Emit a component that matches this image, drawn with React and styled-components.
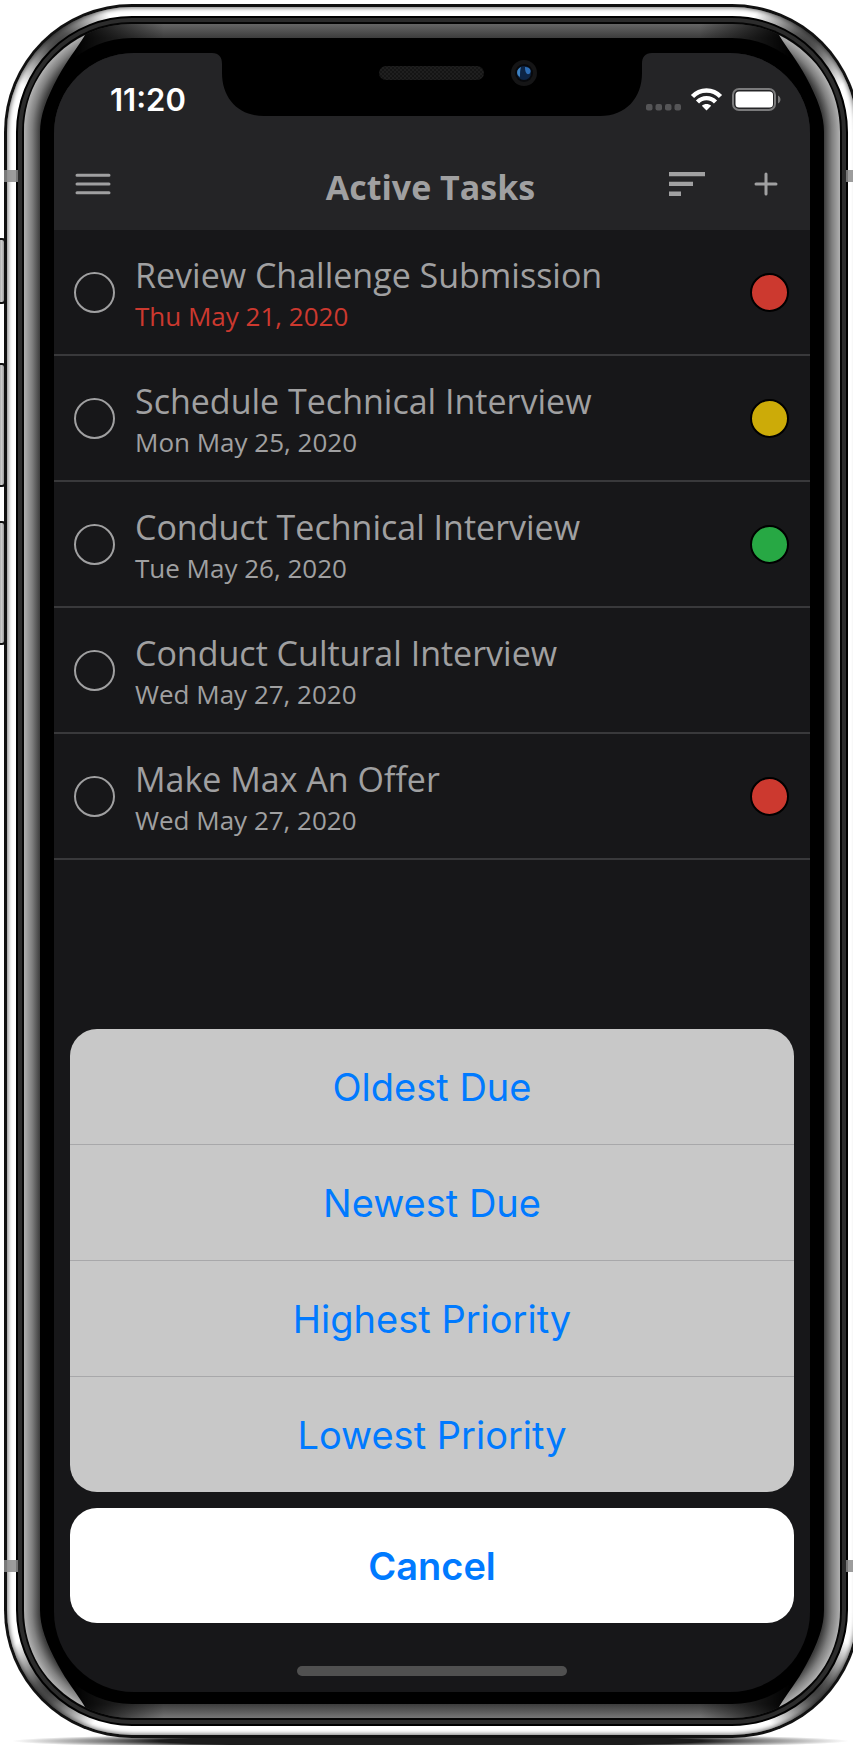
import React from "react";
import styled, { createGlobalStyle } from "styled-components";

const GlobalStyle = createGlobalStyle`
  *, *::before, *::after { box-sizing: border-box; }
  html, body { margin: 0; background: #fff; }
  button { border: 0; padding: 0; margin: 0; background: none; font: inherit; color: inherit; cursor: pointer; }
`;

const Stage = styled.main`
  position: relative;
  overflow: hidden;
  padding: 4px 0 7px 4px;
  min-height: 100vh;
  display: flex;
  flex-direction: column;
`;

const FloorShadow = styled.div`
  position: absolute;
  left: 12px;
  right: 4px;
  bottom: -4px;
  height: 16px;
  background: radial-gradient(closest-side, #1c1c1c 0%, #1c1c1c 65%, rgba(60, 60, 60, 0.6) 80%, transparent 100%);
`;

const Body = styled.div`
  position: relative;
  flex: 1;
  display: flex;
  flex-direction: column;
  margin-right: -7px;
  padding: 3px;
  border-radius: 128px;
  background: #111;
`;

const Steel = styled.div`
  flex: 1;
  display: flex;
  flex-direction: column;
  padding: 9px;
  border-radius: 125px;
  background:
    radial-gradient(circle at 56px 40px, #333 0, #555 14px, transparent 56px),
    radial-gradient(circle at calc(100% - 56px) 40px, #333 0, #555 14px, transparent 56px),
    radial-gradient(circle at 44px calc(100% - 48px), #333 0, #555 14px, transparent 56px),
    radial-gradient(circle at calc(100% - 44px) calc(100% - 48px), #333 0, #555 14px, transparent 56px),
    #fff;
  box-shadow: inset 0 0 4px 1px rgba(0, 0, 0, 0.55);
`;

const Gasket = styled.div`
  flex: 1;
  display: flex;
  flex-direction: column;
  padding: 6px;
  border: 2px solid #000;
  border-radius: 116px;
  background: #2c2c2c;
`;

const Glass = styled.div`
  position: relative;
  flex: 1;
  display: flex;
  flex-direction: column;
  padding: 14px 16px;
  border-radius: 108px;
  box-shadow: 0 0 0 2px #050505;
  background:
    linear-gradient(90deg, #000 50px, transparent 140px, transparent calc(100% - 140px), #000 calc(100% - 50px)),
    linear-gradient(180deg, #666 0, #3c3c3c 14px, #3c3c3c calc(100% - 14px), #777 100%);

  &::before {
    content: "";
    position: absolute;
    inset: 108px 0;
    background:
      linear-gradient(90deg, #b0b0b0, #808080 8px, #3c3c3c) left / 16px 100% no-repeat,
      linear-gradient(270deg, #b0b0b0, #808080 8px, #3c3c3c) right / 16px 100% no-repeat;
  }
`;

const Bezel = styled.div`
  flex: 1;
  display: flex;
  flex-direction: column;
  padding: 15px 14px 12px;
  border-radius: 92px;
  background: #000;
`;

const GlintSvg = styled.svg`
  position: absolute;
  width: 108px;
  height: 108px;
  ${(p) => (p.$v === "top" ? "top: 0;" : "bottom: 0;")}
  ${(p) => (p.$h === "left" ? "left: 0;" : "right: 0;")}
  transform: scale(${(p) => (p.$h === "left" ? 1 : -1)}, ${(p) => (p.$v === "top" ? 1 : -1)});
`;

function Glint({ v, h }) {
  const id = `glint-${v}-${h}`;
  return (
    <GlintSvg $v={v} $h={h} viewBox="0 0 108 108" aria-hidden="true">
      <defs>
        <radialGradient id={id} gradientUnits="userSpaceOnUse" cx="108" cy="108" r="108">
          <stop offset="0.852" stopColor="#3c3c3c" />
          <stop offset="0.926" stopColor="#808080" />
          <stop offset="1" stopColor="#b0b0b0" />
        </radialGradient>
      </defs>
      <path d="M0 108C0 68 20 32 61 11C52 26 43 36 34 53C22 75 16 92 16 108Z" fill={`url(#${id})`} />
    </GlintSvg>
  );
}

const AntennaBand = styled.span`
  position: absolute;
  ${(p) => (p.$h === "left" ? "left: 0;" : "right: 0;")}
  ${(p) => (p.$v === "top" ? "top: 166px;" : "bottom: 166px;")}
  width: 14px;
  height: 12px;
  background: rgba(140, 140, 140, 0.85);
`;

const SideKey = styled.span`
  position: absolute;
  left: -8px;
  top: ${(p) => p.$top}px;
  width: 10px;
  height: ${(p) => p.$h}px;
  border: 2px solid #111;
  border-radius: 4px;
  background: linear-gradient(90deg, #888, #ccc 60%, #999);
`;

const Screen = styled.div`
  position: relative;
  flex: 1;
  display: flex;
  flex-direction: column;
  overflow: hidden;
  border-radius: 80px;
  background: #171719;
  color: #a0a0a1;
  font-family: "Open Sans", sans-serif;
`;

const Notch = styled.svg`
  position: absolute;
  top: 0;
  left: 50%;
  width: 440px;
  height: 64px;
  margin-left: -220px;
`;

const Header = styled.header`
  background: #242426;
`;

const StatusBar = styled.div`
  display: flex;
  align-items: center;
  justify-content: space-between;
  height: 94px;
  padding: 0 28px 0 56px;
  color: #fff;
  font: 600 31px/40px Inter, sans-serif;
`;

const StatusIcons = styled.svg`
  width: 136px;
  height: 24px;
`;

const NavBar = styled.div`
  display: grid;
  grid-template-columns: 1fr auto 1fr;
  align-items: center;
  height: 83px;
  padding: 0 20px 9px 17px;
`;

const Title = styled.h1`
  margin: 0;
  padding-top: 6px;
  font-size: 34px;
  line-height: 44px;
  font-weight: 700;
`;

const NavActions = styled.div`
  display: flex;
  justify-content: flex-end;
  gap: 31px;
`;

const IconButton = styled.button`
  display: flex;
  align-items: center;
  justify-content: center;
  width: 48px;
  height: 48px;
`;

const MenuButton = styled(IconButton)`
  justify-self: start;
  width: 44px;
`;

const TaskList = styled.ul`
  flex: 1;
  margin: 0;
  padding: 0;
  list-style: none;
`;

const TaskRow = styled.li`
  display: flex;
  align-items: center;
  gap: 20px;
  height: 126px;
  padding: 0 21px 0 20px;
  border-bottom: 2px solid #39393b;
`;

const TaskCheck = styled.input`
  appearance: none;
  flex: none;
  width: 41px;
  height: 41px;
  margin: 0;
  border: 2px solid #a0a0a1;
  border-radius: 50%;
`;

const TaskText = styled.label`
  flex: 1;
  display: flex;
  flex-direction: column;
  padding-top: 2px;
`;

const TaskName = styled.span`
  font-size: 34px;
  line-height: 46px;
`;

const TaskDate = styled.time`
  font-size: 26px;
  line-height: 36px;
  color: ${(p) => (p.$late ? "#cc392f" : "inherit")};
`;

const Priority = styled.span`
  width: 39px;
  height: 39px;
  border: 2px solid #000;
  border-radius: 50%;
  background: ${(p) => p.$color};
`;

const ActionSheet = styled.div`
  display: flex;
  flex-direction: column;
  gap: 16px;
  padding: 0 16px;
  color: #007aff;
  font: 400 38px/48px Inter, sans-serif;
`;

const SheetGroup = styled.div`
  display: flex;
  flex-direction: column;
  overflow: hidden;
  border-radius: 27px;
  background: #c8c8c8;
`;

const SheetOption = styled.button`
  box-sizing: content-box;
  height: 115px;

  &:not(:last-child) { border-bottom: 1px solid #a8a8aa; }
`;

const CancelButton = styled.button`
  height: 115px;
  border-radius: 27px;
  background: #fff;
  font-weight: 600;
`;

const HomeArea = styled.div`
  display: flex;
  justify-content: center;
  padding: 43px 0 16px;
`;

const HomeIndicator = styled.div`
  width: 270px;
  height: 10px;
  border-radius: 5px;
  background: #505050;
`;

const RED = "#cc392f";
const YELLOW = "#ccab08";
const GREEN = "#27a844";

const tasks = [
  { name: "Review Challenge Submission", date: "Thu May 21, 2020", iso: "2020-05-21", color: RED, late: true },
  { name: "Schedule Technical Interview", date: "Mon May 25, 2020", iso: "2020-05-25", color: YELLOW },
  { name: "Conduct Technical Interview", date: "Tue May 26, 2020", iso: "2020-05-26", color: GREEN },
  { name: "Conduct Cultural Interview", date: "Wed May 27, 2020", iso: "2020-05-27" },
  { name: "Make Max An Offer", date: "Wed May 27, 2020", iso: "2020-05-27", color: RED },
];

const sortOptions = ["Oldest Due", "Newest Due", "Highest Priority", "Lowest Priority"];

function NotchDrawing() {
  return (
    <Notch viewBox="0 0 440 64" aria-hidden="true">
      <defs>
        <pattern id="mesh" width="4" height="4" patternUnits="userSpaceOnUse">
          <rect width="4" height="4" fill="#151515" />
          <circle cx="1" cy="1" r="0.8" fill="#2a2a2a" />
          <circle cx="3" cy="3" r="0.8" fill="#2a2a2a" />
        </pattern>
      </defs>
      <path d="M0 0C7 0 10 4 10 11V20C10 45 26 63 52 63H388C414 63 430 45 430 20V11C430 4 433 0 440 0Z" fill="#000" />
      <rect x="167" y="13" width="105" height="14" rx="7" fill="url(#mesh)" />
      <circle cx="312" cy="20" r="13" fill="#151516" />
      <circle cx="312" cy="20" r="9" fill="#08090c" />
      <circle cx="312" cy="20" r="7" fill="#0d2444" />
      <path d="M309 14C304 16 304 22 308 24C308 20 308 17 309 14Z" fill="#3f83c4" />
      <path d="M313 14C319 14 320 19 317 21C314 22 313 18 313 14Z" fill="#2d6db5" />
    </Notch>
  );
}

function StatusDrawing() {
  return (
    <StatusIcons viewBox="0 0 136 24" role="img" aria-label="No signal, Wi-Fi on, battery full">
      <g fill="#555557">
        <rect x="0" y="16" width="6.500" height="6.500" rx="2" />
        <rect x="9.500" y="16" width="6.500" height="6.500" rx="2" />
        <rect x="19" y="16" width="6.500" height="6.500" rx="2" />
        <rect x="28.500" y="16" width="6.500" height="6.500" rx="2" />
      </g>
      <g fill="none" stroke="#fff" strokeWidth="4.400">
        <path d="M46.500 8.600C54 0.400 67 0.400 74.500 8.600" />
        <path d="M51.500 14C56.500 8.800 64.500 8.800 69.500 14" />
      </g>
      <path d="M60.500 22.500L55.800 17.800C58.500 15.400 62.500 15.400 65.200 17.800Z" fill="#fff" />
      <rect x="87" y="1" width="42" height="21" rx="6" fill="none" stroke="#7b7b7c" strokeWidth="2" />
      <rect x="89.500" y="3.500" width="37.500" height="16" rx="3.500" fill="#fff" />
      <path d="M132 7.500C135.300 9 135.300 14 132 15.500Z" fill="#7b7b7c" />
    </StatusIcons>
  );
}

export default function App() {
  return (
    <>
      <GlobalStyle />
      <Stage>
        <FloorShadow />
        <Body>
          <SideKey $top={234} $h={66} />
          <SideKey $top={359} $h={124} />
          <SideKey $top={517} $h={124} />
          <Steel>
            <Gasket>
              <Glass>
                <Bezel>
                  <Screen>
                    <Header>
                      <StatusBar>
                        <span>11:20</span>
                        <StatusDrawing />
                      </StatusBar>
                      <NavBar>
                        <MenuButton aria-label="Menu">
                          <svg width="36" height="22" viewBox="0 0 36 22" stroke="#a0a0a1" strokeWidth="3" strokeLinecap="round">
                            <path d="M2 2.300H34M2 11H34M2 19.700H34" />
                          </svg>
                        </MenuButton>
                        <Title>Active Tasks</Title>
                        <NavActions>
                          <IconButton aria-label="Sort">
                            <svg width="36" height="24" viewBox="0 0 36 24" fill="#a0a0a1">
                              <path d="M0 0H36V4.300H0ZM0 9.800H24V14H0ZM0 19.500H12V24H0Z" />
                            </svg>
                          </IconButton>
                          <IconButton aria-label="Add task">
                            <svg width="24" height="24" viewBox="0 0 24 24" stroke="#a0a0a1" strokeWidth="3" strokeLinecap="round">
                              <path d="M12 2V22M2 12H22" />
                            </svg>
                          </IconButton>
                        </NavActions>
                      </NavBar>
                    </Header>
                    <TaskList>
                      {tasks.map((t, i) => (
                        <TaskRow key={t.name}>
                          <TaskCheck type="checkbox" id={`task-${i}`} />
                          <TaskText htmlFor={`task-${i}`}>
                            <TaskName>{t.name}</TaskName>
                            <TaskDate dateTime={t.iso} $late={t.late}>{t.date}</TaskDate>
                          </TaskText>
                          {t.color && <Priority $color={t.color} />}
                        </TaskRow>
                      ))}
                    </TaskList>
                    <ActionSheet role="dialog" aria-label="Sort tasks">
                      <SheetGroup>
                        {sortOptions.map((o) => (
                          <SheetOption key={o}>{o}</SheetOption>
                        ))}
                      </SheetGroup>
                      <CancelButton>Cancel</CancelButton>
                    </ActionSheet>
                    <HomeArea>
                      <HomeIndicator />
                    </HomeArea>
                    <NotchDrawing />
                  </Screen>
                </Bezel>
                <Glint v="top" h="left" />
                <Glint v="top" h="right" />
                <Glint v="bottom" h="left" />
                <Glint v="bottom" h="right" />
              </Glass>
            </Gasket>
          </Steel>
          <AntennaBand $h="left" $v="top" />
          <AntennaBand $h="right" $v="top" />
          <AntennaBand $h="left" $v="bottom" />
          <AntennaBand $h="right" $v="bottom" />
        </Body>
      </Stage>
    </>
  );
}
